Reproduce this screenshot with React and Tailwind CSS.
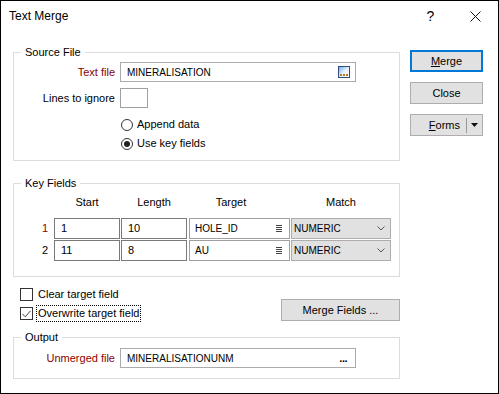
import React from "react";

// small browse icon used in the Text file box
function BrowseIcon() {
  return (
    <svg width="12" height="12" viewBox="0 0 12 12" className="ml-auto">
      <defs>
        <linearGradient id="bg" x1="0" y1="0" x2="1" y2="1">
          <stop offset="0" stopColor="#6aa7f0" />
          <stop offset="0.5" stopColor="#e8f1fc" />
          <stop offset="1" stopColor="#ffffff" />
        </linearGradient>
      </defs>
      <rect x="0.5" y="0.5" width="11" height="11" fill="url(#bg)" stroke="#2f4d7a" />
      <rect x="2" y="8" width="2" height="2" fill="#b07a2a" />
      <rect x="5" y="8" width="2" height="2" fill="#b07a2a" />
      <rect x="8" y="8" width="2" height="2" fill="#b07a2a" />
    </svg>
  );
}

function ListIcon() {
  return (
    <svg width="6" height="8" viewBox="0 0 6 8" className="ml-auto">
      <rect x="0" y="0" width="6" height="1" fill="#444" />
      <rect x="0" y="2" width="6" height="1" fill="#444" />
      <rect x="0" y="4" width="6" height="1" fill="#444" />
      <rect x="0" y="6" width="6" height="1" fill="#444" />
    </svg>
  );
}

function Chevron() {
  return (
    <svg width="8" height="5" viewBox="0 0 8 5" className="ml-auto">
      <path d="M0.5 0.5 L4 4 L7.5 0.5" fill="none" stroke="#555" strokeWidth="1" />
    </svg>
  );
}

function Radio({ checked, label }) {
  return (
    <div className="h-[19px] flex items-center ml-[107px]">
      <div className="w-[12px] h-[12px] rounded-full border border-[#333] bg-white flex items-center justify-center">
        {checked && <div className="w-[6px] h-[6px] rounded-full bg-[#222]" />}
      </div>
      <span className="ml-[4px]">{label}</span>
    </div>
  );
}

function KeyRow({ n, start, length, target, red }) {
  return (
    <div className="flex h-[21px]">
      <span className={"w-[34px] text-right self-center " + (red ? "text-[#8b0000]" : "")}>{n}</span>
      <div className="ml-[6px] w-[66px] border border-[#7a7a7a] flex items-center pl-[6px]">{start}</div>
      <div className="ml-[1px] w-[66px] border border-[#7a7a7a] flex items-center pl-[6px]">{length}</div>
      <div className="ml-[2px] w-[101px] border border-[#a0a0a0] flex items-center pl-[5px] pr-[7px] text-[10px]">
        <span>{target}</span>
        <ListIcon />
      </div>
      <div className="ml-[1px] w-[100px] border border-[#adadad] bg-[#e1e1e1] flex items-center pl-[2px] pr-[5px] text-[10px]">
        <span>NUMERIC</span>
        <Chevron />
      </div>
    </div>
  );
}

export default function App() {
  return (
    <div className="w-[499px] h-[394px] border border-black bg-white flex flex-col text-[11px] leading-[13px] text-black font-['Liberation_Sans',Arial,sans-serif] overflow-hidden">
      <div className="h-[30px] flex items-center shrink-0">
        <span className="pl-[8px] text-[12px]">Text Merge</span>
        <div className="ml-auto flex h-full">
          <div className="w-[45px] flex items-center justify-center text-[14px]">?</div>
          <div className="w-[45px] flex items-center justify-center">
            <svg width="11" height="11" viewBox="0 0 11 11">
              <path d="M0.5 0.5 L10.5 10.5 M10.5 0.5 L0.5 10.5" stroke="#111" strokeWidth="1" />
            </svg>
          </div>
        </div>
      </div>

      <div className="flex pl-[12px] pt-[15px]">
        <div className="w-[387px]">
          <fieldset className="border border-[#dcdcdc] pb-[7px]">
            <legend className="ml-[7px] px-[4px] leading-[13px]">Source File</legend>
            <div className="flex items-center mt-[3px] h-[20px]">
              <span className="w-[101px] text-right text-[#8b0000]">Text file</span>
              <div className="ml-[5px] w-[236px] h-[20px] border border-[#ababab] flex items-center pl-[6px] pr-[5px] text-[10px]">
                <span>MINERALISATION</span>
                <BrowseIcon />
              </div>
            </div>
            <div className="flex items-center mt-[6px] h-[20px]">
              <span className="w-[101px] text-right">Lines to ignore</span>
              <div className="ml-[5px] w-[28px] h-[20px] border border-[#a0a0a0]" />
            </div>
            <div className="mt-[7px]">
              <Radio label="Append data" />
              <Radio checked label="Use key fields" />
            </div>
          </fieldset>

          <fieldset className="mt-[16px] border border-[#dcdcdc] pb-[15px]">
            <legend className="ml-[7px] px-[4px] leading-[13px]">Key Fields</legend>
            <div className="flex mt-[6px] h-[13px]">
              <div className="w-[40px]" />
              <div className="w-[66px] text-center">Start</div>
              <div className="ml-[1px] w-[66px] text-center">Length</div>
              <div className="ml-[2px] w-[101px] pr-[17px] text-center">Target</div>
              <div className="ml-[1px] w-[100px] text-center">Match</div>
            </div>
            <div className="mt-[9px] flex flex-col gap-[1px]">
              <KeyRow n="1" start="1" length="10" target="HOLE_ID" red />
              <KeyRow n="2" start="11" length="8" target="AU" />
            </div>
          </fieldset>

          <div className="flex justify-between mt-[8px] mb-[8px]">
            <div className="ml-[7px]">
              <div className="h-[19px] flex items-center">
                <div className="w-[13px] h-[13px] border border-[#333] bg-white" />
                <span className="ml-[5px]">Clear target field</span>
              </div>
              <div className="h-[19px] flex items-center">
                <div className="w-[13px] h-[13px] border border-[#333] bg-white flex items-center justify-center">
                  <svg width="9" height="8" viewBox="0 0 9 8">
                    <path d="M0.5 4 L3.2 6.8 L8.5 0.8" fill="none" stroke="#444" strokeWidth="1" />
                  </svg>
                </div>
                <span className="ml-[3px] px-[1px] py-[1px] border border-dotted border-black">Overwrite target field</span>
              </div>
            </div>
            <div className="mt-[14px] w-[119px] h-[22px] border border-[#adadad] bg-[#e1e1e1] flex items-center justify-center">
              Merge Fields ...
            </div>
          </div>

          <fieldset className="border border-[#dcdcdc] pb-[10px]">
            <legend className="ml-[7px] px-[4px] leading-[13px]">Output</legend>
            <div className="flex items-center mt-[4px] h-[20px]">
              <span className="w-[101px] text-right text-[#8b0000]">Unmerged file</span>
              <div className="ml-[5px] w-[236px] h-[20px] border border-[#ababab] flex items-center pl-[6px] pr-[8px] text-[10px]">
                <span>MINERALISATIONUNM</span>
                <span className="ml-auto text-[11px] font-bold tracking-[-0.5px]">...</span>
              </div>
            </div>
          </fieldset>
        </div>

        <div className="ml-[10px] w-[73px] pt-[4px] flex flex-col">
          <div className="h-[22px] border-2 border-[#0078d7] bg-[#e1e1e1] flex items-center justify-center">
            <span><span className="underline">M</span>erge</span>
          </div>
          <div className="mt-[10px] h-[22px] border border-[#adadad] bg-[#e1e1e1] flex items-center justify-center">
            Close
          </div>
          <div className="mt-[10px] h-[22px] border border-[#adadad] bg-[#e1e1e1] flex items-center justify-end">
            <span className="mr-[6px]"><span className="underline">F</span>orms</span>
            <div className="w-px h-[15px] bg-[#9a9a9a]" />
            <div className="w-[15px] flex items-center justify-center">
              <svg width="7" height="4" viewBox="0 0 7 4">
                <path d="M0 0 L7 0 L3.5 4 Z" fill="#111" />
              </svg>
            </div>
          </div>
        </div>
      </div>
    </div>
  );
}
